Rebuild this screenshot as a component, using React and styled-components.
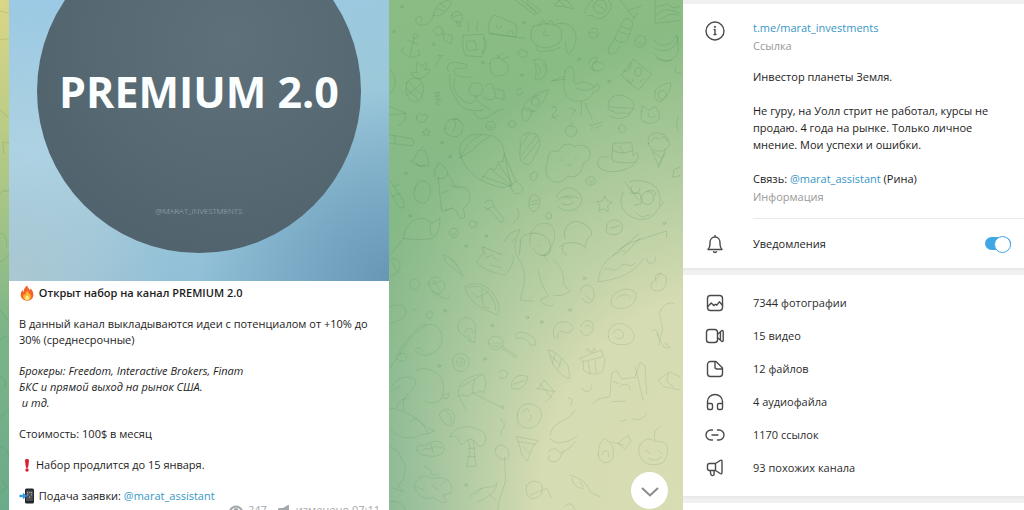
import styled, { createGlobalStyle } from "styled-components"
import { useState } from "react"

const GlobalStyle = createGlobalStyle`
    * {
        box-sizing: border-box;
    }
    body {
        margin: 0;
        font-family: "Open Sans", "Noto Sans", sans-serif;
        font-size: 11px;
        line-height: 17px;
        color: #1c1c1c;
        background: white;
    }
`

const Container = styled.div`
    display: grid;
    grid-template-columns: minmax(0, 1fr) minmax(280px, 341px);
    height: 100vh;
    overflow: hidden;
`

/* ---------- chat ---------- */

const Chat = styled.main`
    position: relative;
    overflow: hidden;
    background:
        radial-gradient(ellipse 150px 330px at 0 0, #dbd786 0%, rgba(219,215,134,0) 100%),
        radial-gradient(ellipse 400px 480px at 105% 100%, #d9ddb3 0%, #d5dbb2 45%, rgba(213,219,178,0) 100%),
        linear-gradient(to bottom, #8abc83 0%, #85b987 45%, #6bab89 100%);
`
const Wallpaper = styled.svg`
    position: absolute;
    top: 0;
    left: 0;
    fill: none;
    stroke: #3f7d4c;
    stroke-opacity: 0.2;
    stroke-width: 3;
    stroke-linecap: round;
    stroke-linejoin: round;
`
const FadedGroup = styled.g`
    stroke-opacity: 0.16;
`
const Message = styled.article`
    position: relative;
    width: 380px;
    max-width: 100%;
    margin: -99px 0 0 9px;
    background: white;
`
const Photo = styled.div`
    display: grid;
    place-items: center;
    aspect-ratio: 1;
    background:
        radial-gradient(ellipse 50% 50% at 100% 100%, #6797b5 0%, rgba(103,151,181,0) 100%),
        radial-gradient(ellipse 45% 35% at 0 100%, #abc7d2 0%, rgba(171,199,210,0) 100%),
        radial-gradient(ellipse 40% 40% at 5% 68%, #aed3e3 0%, rgba(174,211,227,0) 100%),
        linear-gradient(160deg, #9cc9e3 30%, #9cc8da 60%, #8abbd6 100%);
`
const Disc = styled.div`
    display: grid;
    grid-template-rows: 1fr auto 1fr;
    justify-items: center;
    width: 324px;
    height: 324px;
    border-radius: 50%;
    background: radial-gradient(circle at 60% 35%, #5e7079 0%, #566972 50%, #4b5e6a 100%);
`
const PhotoTitle = styled.h2`
    grid-row: 2;
    margin: 0;
    padding-top: 2px;
    font-size: 43px;
    line-height: 46px;
    font-weight: 700;
    white-space: nowrap;
    color: #fbfeff;
`
const PhotoHandle = styled.span`
    grid-row: 3;
    align-self: end;
    padding-bottom: 36px;
    font-size: 8px;
    line-height: 12px;
    font-weight: 300;
    color: #a3b0b6;
`
const MessageBody = styled.div`
    display: flex;
    flex-direction: column;
    gap: 15px;
    padding: 4px 10px 0;
    line-height: 16px;
`
const Paragraph = styled.p`
    margin: 0;
    white-space: pre-wrap;
    font-style: ${props => props.$italic ? 'italic' : 'normal'};
    font-weight: ${props => props.$bold ? 600 : 400};
`
const Emoji = styled.svg`
    width: 16px;
    height: 16px;
    margin-right: 1px;
    vertical-align: top;
`
const Meta = styled.div`
    display: flex;
    align-items: center;
    justify-content: flex-end;
    gap: 5px;
    padding: 0 9px 6px;
    line-height: 12px;
    color: #a3a8ab;

    svg {
        width: 14px;
        height: 12px;
    }
    svg + span + svg {
        margin-left: 5px;
    }
`
const LinkTag = styled.a`
    color: #3797c6;
    text-decoration: none;

    &:hover {
        text-decoration: underline;
    }
`
const ScrollButton = styled.button`
    position: absolute;
    right: 15px;
    bottom: 1px;
    display: grid;
    place-items: center;
    width: 37px;
    height: 37px;
    padding: 3px 0 0;
    border: none;
    border-radius: 50%;
    background: white;
    cursor: pointer;
`

/* ---------- channel info ---------- */

const Sidebar = styled.aside`
    display: flex;
    flex-direction: column;
    overflow: hidden;
    background: white;
`
const Separator = styled.div`
    flex: none;
    height: ${props => props.$small ? '4px' : '7px'};
    background: ${props => props.$small ? '#f0f0f0' : 'linear-gradient(to bottom, #e7e7e7, #f1f1f1 4px)'};
`
const Row = styled.div`
    display: grid;
    grid-template-columns: 24px minmax(0, 1fr);
    column-gap: 26px;
    padding-left: 20px;
`
const InfoRow = styled(Row)`
    padding-top: 15px;
`
const InfoText = styled.div`
    display: flex;
    flex-direction: column;
    gap: 1px;
    padding-bottom: 13px;
    border-bottom: 1px solid #e9e9e9;
`
const Label = styled.span`
    color: #999;
`
const About = styled.p`
    margin: 13px 0 0;
    padding-right: 20px;
    white-space: pre-line;
`
const NotifyRow = styled(Row).attrs({ as: 'label' })`
    grid-template-columns: 24px minmax(0, 1fr) auto;
    align-items: center;
    height: 49px;
    padding-right: 13px;
    cursor: pointer;
`
const Toggle = styled.input`
    appearance: none;
    position: relative;
    width: 26px;
    height: 13px;
    margin: 0;
    border-radius: 7px;
    background: ${props => props.checked ? '#40a7e3' : '#b5b5b5'};
    cursor: pointer;

    &::after {
        content: "";
        position: absolute;
        top: -1px;
        ${props => props.checked ? 'right: 0;' : 'left: 0;'}
        width: 15px;
        height: 15px;
        border: 1px solid ${props => props.checked ? '#40a7e3' : '#b5b5b5'};
        border-radius: 50%;
        background: white;
    }
`
const MediaList = styled.ul`
    flex: none;
    margin: 0;
    padding: 11px 0 12px;
    list-style: none;
`
const MediaButton = styled(Row).attrs({ as: 'button' })`
    align-items: center;
    width: 100%;
    height: 33px;
    padding-top: 0;
    padding-bottom: 0;
    border: none;
    background: none;
    font: inherit;
    color: #2c2c2c;
    text-align: left;
    cursor: pointer;

    &:hover {
        background: #f4f4f4;
    }
`
const Icon = styled.svg`
    width: 24px;
    height: 24px;
    fill: none;
    stroke: #4a4a4a;
    stroke-width: 1.4;
    stroke-linecap: round;
    stroke-linejoin: round;
`

const media = [
    {
        text: '7344 фотографии',
        icon: <><rect x="4.5" y="4.5" width="15" height="15" rx="3" /><path d="M4.8 15.500l3.400-3.500 2.600 2.600 1.600-1.400 1.400 1 2.500-3.400 3.200 3.500" /></>
    },
    {
        text: '15 видео',
        icon: <><rect x="3.5" y="5.5" width="11" height="13" rx="2.8" /><path d="M14.5 10.2l3.8-3.2c1-.8 1.900-.4 1.900.8v8.400c0 1.200-.9 1.600-1.900.8l-3.800-3.200M17.400 8v8" /></>
    },
    {
        text: '12 файлов',
        icon: <path d="M7.500 4.500H13l6.500 6.500v5.500a3 3 0 0 1-3 3h-9a3 3 0 0 1-3-3v-9a3 3 0 0 1 3-3zM12 4.500V10a2 2 0 0 0 2 2h5.500" />
    },
    {
        text: '4 аудиофайла',
        icon: <path d="M4.500 17v-5.500a7.500 7 0 0 1 15 0V17M4.500 13.500H8a1.500 1.500 0 0 1 1.500 1.500v3A1.500 1.500 0 0 1 8 19.500H6A1.500 1.500 0 0 1 4.500 18zM19.500 13.500H16a1.500 1.500 0 0 0-1.500 1.500v3a1.500 1.500 0 0 0 1.500 1.500h2a1.500 1.500 0 0 0 1.500-1.500z" />
    },
    {
        text: '1170 ссылок',
        icon: <path d="M9.500 7H8a5 5 0 0 0 0 10h1.500M14.500 7H16a5 5 0 0 1 0 10h-1.500M9 12h6" />
    },
    {
        text: '93 похожих канала',
        icon: <path d="M12.500 7.500H6.500a2 2 0 0 0-2 2v3a2 2 0 0 0 2 2h6M12.500 7.500v7l4.700 3c1.100.7 1.800.3 1.800-.9V5.400c0-1.200-.7-1.600-1.800-.9zM7.200 14.500l.6 3.600c.2 1 .8 1.500 1.700 1.500s1.600-.6 1.600-1.600v-3.500" />
    }
]

// line doodles, drawn on a grid three times finer than the chat
const doodlesTop = [
    'M130 45c5-25 20-40 50-45M130 45c20 10 45-10 55-40M140 25l25 10M150 10l18 15M130 48c-10 30-35 30-45 25s-10-20 0-24 15 12 5 20',
    'M185 45c5-15 30-15 32 5s-12 22-22 14-12-12-10-19zM200 62l5 18 8-2-4-16M190 50l24-6',
    'M375 0l60 45 18-12L400-8M385-6l56 45M410 8l28 26',
    'M495 15c10-18 25-20 40-10l15 22-30-8-20 0zM505 0l20 18',
    'M585 40c0-20 15-30 25-42M590 48c20-6 25 6 35 8s25-8 35-25-5-30-5-30M610 22a20 20 0 1 0 40-4 20 20 0 1 0-40 4M618 12l25 16',
    'M690 0c10 15 20 20 25 35 10-14 30-8 40-20M715 35l20 20M700 60c10-12 30 0 28 15l-15 45c-8 10-35 10-38-5zM675 115c-10 15-25 30-18 45 15 5 25-5 30-20M695 80l25 8M688 95l26 8M728 60l14-20',
    'M795 0v70l75-8M800 20l35-8c10 15 25 15 35 5M800 45c20-25 45-15 70-5M810 60c20-20 40-18 55-15',
    'M35 150c10 25 35 25 55 15M45 140l-10 12M60 165c5-20 8-35 12-50M52 120l30 12M72 115c-8-8 0-18 8-12s2 14-8 12M88 165l-2-15',
    'M130 90c8-15 28-12 28 2s-14 18-22 10zM160 100l28 8-5 24-20-12z',
    'M220 105l60-2c5 25 5 45-4 68l-50-4c-8-18-10-40-6-62zM280 115c14 5 12 42-5 42M230 125c8-8 16 4 24-4l8 30c-10-6-20 6-30-2zM235 92c-6-12 6-15 0-28M262 92c-6-12 6-15 0-25',
    'M298 100c-5-25 0-45 15-55l60 25c10 5 8 25 5 40zM300 100l105 15M320 75a8 6 0 1 0 14 2M355 100c0-12 15-12 15 2',
    'M430 80c-12 18-10 45 10 55 20 15 50 8 70-10 10-25 5-45-20-52-20-3-45-2-60 7zM445 80l15-20 10 12 14-12 6 12M500 72c30-8 55 5 58 40 2 20-10 40-22 50-8-5-10-22-8-35M440 140c-5 10 5 16 20 14s30 0 50-12M465 90l-5 15 14 2',
    'M597 98a14 15 0 1 0 28 4 14 15 0 1 0-28-4M602 100c8-8 16 0 20 8',
    'M736 120a16 15 0 1 0 30 8 16 15 0 1 0-30-8M745 126a6 6 0 1 0 12 2',
    'M795 120c5 15 25 20 45 10 15-8 10-20 20-22M795 145c15 12 45 10 60-10s5-20 5-30M793 160c15 30 60 30 72-5l-3-45M800 175c15 10 30 12 45 5',
    'M50 250c-5 25 0 50 25 56 20 0 28-30 24-50-5-25-40-30-49-6zM55 245l40 40M50 265l35 35M95 250l-42 35M90 235c15-5 25-12 30-28l-18 3c8-10 8-16 6-24l-14 14c-2-10-8-12-14-12 0 12-4 20 2 32-10-4-15-2-20 0 4 10 14 14 28 17z',
    'M140 170c4-8 14-4 10 5s-12 10-10 22M150 168l12-2M132 280l16-4-14 14 16-4-14 14 16-2-14 14 12 4',
    'M300 190c0-15 20-22 35-12s22 20 20 32-18 18-34 18-22-20-21-38zM325 175c2-10 8-14 14-16M335 178l20-8M328 172l-12-10',
    'M385 158c4-10 14-12 16-4 10-6 14 6 8 16-12 6-28-2-24-12z',
    'M432 180c20-10 40 5 38 30s-20 30-36 26c8-18 4-38-2-56zM440 190l14 20-10 18M455 190l12 14',
    'M175 215c-10-25 10-30 30-27s35 8 25 14-35-2-38 12 20 18 50 18M180 225c-5 30 5 55 30 90 20 20 50 18 70 15M240 260c8-18 35-15 38 5s-20 30-32 20-10-15-6-25zM285 260c10-18 25-10 25 5l32 8v25l-25-5M310 270c20 25-10 40-30 20M250 335c5 15 20 25 35 20s35-25 55-28M255 285c0 25 30 30 45 45M195 235c-10 30 0 50 30 70 15 10 25 5 30-5',
    'M380 270l14-5M378 280c8 10 20 6 18-4',
    'M400 325c-10 20-2 35 5 38 10 4 20-20 22-32M400 325c5-25 35-45 75-56-5 25-22 45-42 66zM425 300a12 12 0 1 0 22 10 12 12 0 1 0-22-10M430 290l20-4M410 322l20 10',
    'M525 215c5-20 25-18 27 0s-5 30 5 38c15-10 45-8 55 10l10-12c12 14 5 22-12 26-10 25-40 30-60 25-35-10-30-50-25-87zM524 238l-40 5 38-14M575 305l-2 40M585 310l22 50M540 325l18 5-12 12M600 375c5-10 10 10 4 12M610 375l28-10M615 385l22-10M560 265c20 10 40 8 55-5',
    'M485 325c12-15 20 5 10 12s-10 15 4 20M482 355l22-8M490 322l5-4',
    'M595 190c5-15 20-22 28-15l-12 15c10-5 25-8 30 5M600 200c10 15 30 18 42 5M612 215c-10-20-5-28 8-30',
    'M695 225l35-47 55 45-40 47zM700 215c15 0 25-10 22-25M735 215a10 9 0 1 0 18 2 10 9 0 1 0-18-2M715 235a8 8 0 1 0 14 4M750 245l14-10',
    'M655 320c-5-25 20-38 40-34s45 22 35 38zM653 325c5 10 15 5 20 12s25 0 30 2 20 5 28-15M658 345c10 15 50 15 65-5',
    'M795 275c5-15 20-22 48-27-2 25-12 45-30 57-15-2-22-15-18-30zM805 280c5-15 30-10 22 8s-24 10-22-8',
    'M755 335l2-18 18 14c8-4 15-8 20-12l12 18c8 25-15 35-35 32s-22-20-17-34zM775 340c-2 14 15 18 22 6',
    'M80 350c5-15 15-8 18-4 8-8 18 0 12 10s-14 12-20 10-12-8-10-16z',
    'M165 385c0-20 15-30 28-28s28 8 25 30-18 25-32 22-22-12-21-24zM192 358c8 15 4 28-5 38M188 360c10-8 18-4 20 2',
    'M97 395l8-2 4-8 4 8 8 2-6 5 2 8-8-4-8 4 2-8zM288 380a14 12 0 1 0 28-6 14 12 0 1 0-28 6M298 376a5 5 0 1 0 8 0M355 372c-2-12 20-14 22-2s-18 18-22 2M525 392c5-15 12-14 20-14s22 10 12 24-26 10-32-10M540 378l8-12M686 385c0-14 20-14 22 0s-20 22-22 0',
    'M0 405l65 10c10 5 8 20-2 22L0 430M15 408v20M0 320l45 18c5 15-5 35-20 38M0 345l48-5M0 210c20 15 22 50 0 70',
    'M210 460c-5-35 20-57 60-57s65 10 72 50 10 60 22 102l-24 8c-50-10-110-30-130-103zM212 475c10-30 30-58 62-70M205 475l45-25c15-20 30-30 50-40M280 530l20-25 15 5 12-25 12 0 2-20M280 530l85 30M305 510l60 48M325 490l45 66M342 460l36 85M362 555l18-12 20 22c-5 15-18 18-28 14l-12-20M280 530l-6 10',
    'M395 410c12-15 30-12 42-8M390 415c5 25-5 45 2 65 10 18 22 15 28 12 15-20 20-40 30-55 0-20-5-30-12-35M395 465l45-58M400 480l48-60M395 435l20-30',
    'M475 470c0-15 15-20 30-15 10-22 30-30 50-15 15-8 40-5 45 15 5 20-10 30-20 35-5 35-25 45-45 38-15 20-40 25-55 10-20-15-10-45-5-68zM515 478l2 4M555 475l3 3M532 495c6 5 10 2 12-2',
    'M625 500c-8-25 10-35 30-28M665 470c5-18 0-30 5-40l55-2 5 40 10-10c8 8 5 20-5 28-20 5-50 2-65-2zM625 500c20 25 90 18 115-15M668 450c20 12 40 10 58 2M690 440l12 20',
    'M775 430c-5-30 20-35 38-30s30 25 22 40c-20 25-55 12-60-10zM785 450l22 52 20-55M790 455l25 20M805 495l20-35M785 425c5-18 20-14 24-4M815 415c8-10 18 0 16 8',
    'M65 485c12-5 12-30 25-35 18-2 22 12 24 30l2 18c-20 2-38-2-51-13zM80 488c2 14 18 16 24 4M92 448l8-8',
    'M140 495c5-10 15-5 20 3s18 15 10 28-20 8-30 10M145 530l5 60 5 42c15 2 20 0 30-8l15 10 10 22 15-4-5-26c20-15 25-35 15-52s-20-10-35-15-15-30-28-38M155 580l20-8M180 555l25 10M135 530c-5-20 5-28 10-38M165 630l20-6',
    'M75 565c5-22 22-28 35-18s15 30 5 50-25 12-35 5-8-22-5-37zM425 520c8-10 20-2 17 8s-12 18-16 12-8-14-1-20M418 600c2-22 20-18 28-8s4 30-8 40-25-8-20-32M425 605l18-5M423 615l20-5',
    'M285 610c5-12 15-12 22-6l8 20 28 35-10 10-28-34-22-15M310 620l-20 8M382 625c10 15 5 30-12 45M588 540c5-15 28-12 28 2s-28 22-28-2M600 542a4 4 0 1 0 7 0',
    'M500 590c5-20 30-30 45-25s28 18 30 32-12 30-28 34-38-2-43-12M505 600c10-15 45-15 60-5M515 610c12 8 30 5 35-5M525 590l20 6',
    'M620 605l18-2 6-16 8 15 14 5-13 10 2 18-14-8-15 5 4-15z',
    'M700 575c-12 25-10 50 15 70 30 20 60 18 80-5l25-35M720 545c25-8 60-2 80 20 15 25 10 35 8 50M725 560a14 12 0 1 0 25 4M755 590a17 18 0 1 0 36 8 17 18 0 1 0-36-8M705 545l40 55M720 580l30 0 5 30-22 6M770 575c15-10 30 0 28 12M740 640l15 12 25-8',
    'M0 540l25 40c15 15 20 30 15 45l-15-5L0 575M30 580l-22 8M10 560l18-6',
    'M0 765l40-50c5-35 20-55 55-60 15 0 25 12 30 15l25-15c0 25-5 45-18 55-12-5-15-20-10-38M40 715c30 5 60 5 90 0',
    'M650 680c0-15 20-25 35-18s15 20 8 32-25 10-35 8-10-10-8-22M660 685l30-8M178 700a13 14 0 1 0 26-2 13 14 0 1 0-26 2M187 698a5 5 0 1 0 8 0M237 672l8-12 10 8 6-2-2 14-14 4zM468 645l8-10 8 8 0 12-12 2z',
    'M345 725c5-20 20-30 45-36-5 20-15 25-25 35M390 720c5-15 30-22 50-20s40 15 42 40-15 30-30 25M392 722l-4 43M445 735l3 2M285 765l-8-25 60 25M525 715c-10-35 20-55 40-50s42 20 40 40c-15 10-15 20-20 35M510 740c20-20 60-15 80 5M530 765c-15-5-15-20-10-28',
    'M670 765c10-10 40-35 60-40l100-32v20M690 750l55-48M700 765l50-50',
    'M865 350c-8 15-5 30 0 40M870 500l-18 10-4 22 22-5M860 200a10 10 0 1 0 12 18'
]

const doodlesBottom = [
    'M0 15c15-10 32 0 30 20S10 65 0 60M5 20l20 35M160 0c15 5 35 15 40 30l20 35-35-30c-12-5-20-18-25-35zM180 10l20 22',
    'M280-8l-20 28c20 25 55 35 85 40 20-20 30-50 25-60M285 10l20-10 20 20M300 30l35 8',
    'M380-50c-20 45 20 70 22 100 5 35-5 60-12 85 15 5 30-2 40 5M445 45c5 35 20 60 30 78l-25 12c5 15 35 25 40 12M490 15c25 20 35 50 30 70l20 25c-20 10-35 15-50 10M430-20c10 25 40 30 50 5M420-35c-5-35 20-65 50-60s30 50 10 75-20 15-10 35',
    'M625 80c5-60 40-80 80-95M625 80c50-5 105-20 135-70M640 45c20-15 30 15 50-10 20-20 25 10 45-10M770 10a14 12 0 1 0 25-4',
    'M60 90a13 15 0 1 0 28-4 13 15 0 1 0-28 4M115 85c5-20 25-25 40-10s10 25-2 38-30-5-38-28zM140 112l14 16 20 5 8-15M130 75l20 30M118 90l34-12M125 105l15 20',
    'M225 95c30-20 65-5 85 22s20 50 12 63C270 160 235 140 225 95zM235 98c25-10 50 0 65 22s18 30 16 45M245 110l15 15M275 105l5 50 18 5M260 130l35-20',
    'M0 205c35-8 50-20 48-38S25 145 0 155M68 165l12-4M110 175l12-8 8 12-8 12-12-4z',
    'M205 225c-10-35 25-45 42-30s5 40 8 68l-18-5c-10-20-25-15-32-33zM225 232c5-18 22-15 25 0M235 240l8 15',
    'M295 265a22 20 0 1 0 44-3 22 20 0 1 0-44 3M304 264a13 12 0 1 0 26-2M312 262a5 5 0 1 0 10 0M335 280l45 30M337 274l45 30',
    'M378 235c15-8 30-2 45 8s12 15 14 26l-15 3c-8-20-20-25-42-22zM490 225c5-25 30-30 48-20s10 25-2 28-20-12-32 2l0 15-12-5z',
    'M105 210c25-8 45 5 50 30s-10 50-40 60c-20 5-35-5-38-14s12-12 22 2M110 210C75 230 40 270 30 300M105 205C65 230 40 265 22 300M20 310c5-20 28-18 30-5s-20 20-30 5L0 340',
    'M188 320c0-22 20-28 35-22s20 30 5 45-40 5-40-23M200 320c5-18 28-12 24 4s-28 10-24-4M210 318a5 5 0 1 0 8 0',
    'M80 345c25-10 55 0 70 20s10 35 8 52-10 22-25 26-25-2-28-5M158 420l20-5-5 15-15 0',
    'M205 425c-5-35 15-60 75-68 10 25 8 45 0 55-10-5-20 0-22 5-10-8-18-2-22 8-10-6-22-5-31 0zM255 375c-10 20-8 35-2 45M275 360l-60 35M260 420l80 40M340 460c5-10-5-10-10-4M210 430l20 40',
    'M5 395c10-25 45-35 65-25s-5 35-15 45-25 30-10 50M0 410l28-15M20 460c5-25 20-30 35-30',
    'M0 460c45 5 95 30 115 75l-25 5M0 520c15 25 50 35 85 25M60 500c10-15 30-8 45 15M115 520l20 8-20 8',
    'M148 480c5-22 30-22 40-8s5 25 0 36-35-2-40-28M165 468c15 5 20 20 18 35M325 355c5-12 25-12 28 0s-20 22-25 10M365 385c5-25 30-28 48-20-2 25-20 45-48 35zM370 388l35-12',
    'M475 285c15 0 45 25 60 50l5 35c-20 0-40-25-50-40zM480 300l30 28M495 300l-8 25M515 312l-10 30M570 310l65-25 5 20-60 15zM580 320l0 25c20 18 50 15 60 0l5-35M595 320l5 35M615 315l3 38M600 295c-20-15-5-20 5-2 5-18 20-15 5 0',
    'M655 245c-5-30 25-45 45-38s35 25 32 42-20 20-40 20-35-10-37-24zM670 235c5-15 25-15 30 0s-15 22-25 10M665 130c10-25 45-35 65-22s0 40-10 45-40 15-55-2zM680 130c15-15 35-15 42 0M570 110c5-25 40-30 42 5s-25 35-35 15M585 120l20 15',
    'M572 215c8-25 38-25 38 0s-30 40-38 10M585 215c5-8 18-5 16 5M785 85c10-10 20-15 25-30l18 10c5 25-5 40-20 42s-30-2-23-22M810 55c-15 0-18 20-10 25',
    'M808 180c5-30 25-40 45-35M810 185l8 35-12 50M800 235l20 40c25 10 25 0 5-10M785 230c10-15 22 0 20 15',
    'M660 420l5-65 15-8 15 25 40-5 15-45 15 10 5 85M670 380l15 5M665 440l40-2M690 395c10-15 35-5 30 10M735 335l25 100M690 500l20-6M725 490c20 10 35 0 45-15',
    'M805 375l35-25 30 15M805 375l15 20 50 10M835 355l-5 25 20 15M575 400c15 20 35 5 30-10M610 445c15-20 35-15 50-20M535 430c15-5 15 15 5 22',
    'M445 400l18-25 30 35c-10 15-15 20-25 30M440 400l55 10M450 385l35 45',
    'M382 480c5-35 30-40 55-28s20 45 0 60-60 8-55-32zM400 470c5-12 15-12 16 0M420 480c8 5 5 15-8 18M335 490c-8 15 10 5 8 20s-12 10-10 30',
    'M180 545c10-25 40-35 65-28s45 15 42 35-15 25-22 20-15-25-30-18-15 20-25 10 0-25-30-19zM235 555c10 25 0 55-5 80l30-2c-10-30-5-55-10-78M235 580l20 0M232 605l25 0',
    'M80 585c0-20 15-15 25-12 15-15 40-20 52-5s0 30-5 30-15 10-35 5-15 5-37-18zM95 590c10-20 25 0 35-12s15 5 25 0M122 565l8 30',
    'M380 545l65 12c-5 10-15 10-18 20l-15 40c-10-5-20-20-20-35zM385 560l50 8M400 575l20 20M318 580c10-20 35-8 38 15s-20 25-32 10-10-15-6-25z',
    'M480 540c5-35 40-40 60-55l15-20M480 550c20 25 55 10 80-5M475 590c10-10 25-15 35 5 15-10 35-15 45-35M480 600c-15 15 5 25 20 18s10-20 22-28',
    'M625 600c0-30 10-45 20-50 15 15 28 20 25 50s-40 32-45 0zM635 600c5-20 25-15 22 5M685 565l30-25 8 20-18 22zM660 560l40 10',
    'M750 570c15-25 35-20 45-10 20-5 42 5 38 30s-10 35-30 38-45 0-53-25 0-33 0-33zM795 555c-5-20 0-30 15-40M765 585l15 10M805 585l10 10M775 610c15 10 30 5 40-5',
    'M15 580c15 10 15 30 25 40s5 60-15 70l15 20-30-10M0 575l15 10M100 630l20 15 5 15 20 0M95 665c20-10 25 10 40 5s45-2 50 25-15 20-25 25l10 20c-10 10-30-5-35-10s-30 10-50-15-10-35 10-50M125 690l20 15M80 695l20 10M150 690l20-15',
    'M240 730c5-20 35-35 70-35l10-10c0 25-30 45-55 55M345 605c-5 35 8 55-2 85s-15 40-20 75M300 720l20 20M255 720l20-20M0 740c25-5 45 10 45 25',
    'M410 690c10-15 40-15 45 0s0 35-20 40-30-15-25-40M420 720l50-20 15 30M540 660c30 10 50 20 60 50l30 15M545 670c5 20 15 30 35 30M570 680l10 15M525 755c10-15 25-10 30 10'
]

const dots = [
    [402, 68], [130, 133], [567, 178], [395, 225], [657, 245], [278, 188], [156, 428], [180, 470], [47, 520], [823, 670],
    [288, 708], [228, 738], [60, 648], [165, 932], [307, 977], [455, 966], [540, 930], [285, 1077], [147, 1098], [412, 953],
    [583, 835], [228, 1455], [35, 20], [12, 95]
]

const doodlesLeft = [
    'M27 40c-12 0-18-8-27-6M27 120C12 110 8 125 0 118M0 330c10 5 16 20 26 22M27 430L8 425l4 35M0 580c15-20 20 5 27-10',
    'M0 700c18 0 22 20 20 40M27 765c-15 5-15 25-27 20M0 930l27 35M27 1010c-15-8-20 10-27 12M0 1130c15 5 22 20 12 35M27 1230l-27 22M0 1340c20 0 25 20 27 35M5 1440l16 20-18 18'
]

const Doodles = () => (
    <Wallpaper width="683" height="510" aria-hidden="true">
        <g transform="scale(0.3333)">
            {doodlesLeft.map((d, i) => <path key={i} d={d} />)}
        </g>
        <g transform="translate(390 0) scale(0.3333)">
            {doodlesTop.map((d, i) => <path key={i} d={d} />)}
            {dots.map(([x, y]) => <circle key={x + '-' + y} cx={x} cy={y} r="4" />)}
        </g>
        <FadedGroup transform="translate(390 255) scale(0.3333)">
            {doodlesBottom.map((d, i) => <path key={i} d={d} />)}
        </FadedGroup>
    </Wallpaper>
)

const Fire = () => (
    <Emoji viewBox="0 0 16 16" aria-label="огонь">
        <path fill="#f2622a" d="M8.200.5c.4 2.300 2 3.300 2.800 5 .4-.7.4-1.500.2-2.200 2 1.600 3.300 4.200 3.200 6.800-.1 3.400-2.600 5.600-6.100 5.600S1.800 13.500 1.700 10c0-2 .8-3.700 1.800-5 .1 1 .5 1.700 1.100 2.200C4.600 4.300 6 1.800 8.200.5z" />
        <path fill="#ffb52e" d="M8.300 5.500c.2 2 3.900 3.400 3.700 6.300-.1 2.200-1.700 3.500-3.800 3.500s-4-1.300-4.100-3.500c0-1.300.5-2.200 1.200-3 .3.800.7 1.200 1.200 1.300-.1-1.800.5-3.600 1.800-4.600z" />
        <path fill="#fff0a0" d="M8.300 10c.3 1.100 1.800 1.600 1.700 3.100-.1 1.300-.9 2-1.900 2s-1.900-.8-1.900-2c0-1.400 1.600-1.900 2.100-3.100z" />
    </Emoji>
)

const Exclamation = () => (
    <Emoji viewBox="0 0 16 16" aria-label="важно">
        <path fill="#dc1f2e" d="M6 3.500C6 2.500 6.800 2 8 2s2 .5 2 1.500L9.200 10c-.1.600-.5 1-1.200 1s-1.100-.4-1.200-1z" />
        <circle fill="#dc1f2e" cx="8" cy="13" r="1.700" />
    </Emoji>
)

const Phone = () => (
    <Emoji viewBox="0 0 16 16" aria-label="телефон">
        <rect x="6" y="0.500" width="9" height="15" rx="1.500" fill="#22272b" />
        <rect x="7.200" y="2.500" width="6.600" height="10.500" fill="#4c5053" />
        <path fill="#c8a38c" d="M8 4h1.200v1.200H8zM12 4h1.200v1.200H12zM10 8.500h1.200v1.200H10z" />
        <path fill="#82a9ba" d="M10 4h1.200v1.200H10zM8 6.300h1.200v1.200H8zM12 6.300h1.200v1.200H12z" />
        <path fill="#2f9ae0" d="M.5 6.800h3.500V4.800L8 8l-4 3.200v-2h-3.500z" />
    </Emoji>
)

const App = () => {

    const [notify, setNotify] = useState(true)

    return (
        <>
            <GlobalStyle />
            <Container>
                <Chat>
                    <Doodles />
                    <Message>
                        <Photo>
                            <Disc>
                                <PhotoTitle>PREMIUM 2.0</PhotoTitle>
                                <PhotoHandle>@MARAT_INVESTMENTS</PhotoHandle>
                            </Disc>
                        </Photo>
                        <MessageBody>
                            <Paragraph $bold><Fire /> Открыт набор на канал PREMIUM 2.0</Paragraph>
                            <Paragraph>В данный канал выкладываются идеи с потенциалом от +10% до 30% (среднесрочные)</Paragraph>
                            <Paragraph $italic>{'Брокеры: Freedom, Interactive Brokers, Finam\nБКС и прямой выход на рынок США.\n и тд.'}</Paragraph>
                            <Paragraph>Стоимость: 100$ в месяц</Paragraph>
                            <Paragraph><Exclamation />Набор продлится до 15 января.</Paragraph>
                            <Paragraph><Phone /> Подача заявки: <LinkTag href="#assistant">@marat_assistant</LinkTag></Paragraph>
                        </MessageBody>
                        <Meta>
                            <svg viewBox="0 0 14 12" fill="none" stroke="currentColor" strokeWidth="2">
                                <path d="M1 6.500c3-5.500 9-5.500 12 0-3 5-9 5-12 0z" />
                                <circle cx="7" cy="6.500" r="1.500" />
                            </svg>
                            <span>247</span>
                            <svg viewBox="0 0 14 12" fill="currentColor">
                                <path d="M1 5.500C1 4.500 1.700 4 2.500 4H6l5-3c.7-.3 1 0 1 .5v9c0 .5-.3.800-1 .5L6 8v3H4L3 8c-1.200 0-2-.5-2-1.500z" />
                            </svg>
                            <span>изменено 07:11</span>
                        </Meta>
                    </Message>
                    <ScrollButton aria-label="Вниз">
                        <svg width="18" height="10" viewBox="0 0 18 10" fill="none" stroke="#8b8b8b" strokeWidth="2">
                            <path d="M1 1l8 7.500L17 1" />
                        </svg>
                    </ScrollButton>
                </Chat>
                <Sidebar>
                    <Separator $small />
                    <InfoRow>
                        <Icon viewBox="0 0 24 24">
                            <circle cx="12" cy="12" r="9" />
                            <path d="M11.200 10.500h.8v5M11 15.500h2" />
                            <circle cx="12" cy="7.800" r="0.400" />
                        </Icon>
                        <InfoText>
                            <LinkTag href="#channel">t.me/marat_investments</LinkTag>
                            <Label>Ссылка</Label>
                            <About>
                                {'Инвестор планеты Земля.\n\nНе гуру, на Уолл стрит не работал, курсы не продаю. 4 года на рынке. Только личное мнение. Мои успехи и ошибки.\n\nСвязь: '}
                                <LinkTag href="#assistant">@marat_assistant</LinkTag> (Рина)
                            </About>
                            <Label>Информация</Label>
                        </InfoText>
                    </InfoRow>
                    <NotifyRow>
                        <Icon viewBox="0 0 24 24">
                            <path d="M5 17.500c1.500-1.500 2-3 2-5.500v-1.500c0-3 2-5.500 5-5.500s5 2.500 5 5.500V12c0 2.500.5 4 2 5.500zM12 3.500V5M10.500 19.800c.8.700 2.200.7 3 0" />
                        </Icon>
                        <span>Уведомления</span>
                        <Toggle type="checkbox" checked={notify} onChange={(e) => setNotify(e.target.checked)} />
                    </NotifyRow>
                    <Separator />
                    <MediaList>
                        {media.map(item => (
                            <li key={item.text}>
                                <MediaButton>
                                    <Icon viewBox="0 0 24 24">{item.icon}</Icon>
                                    <span>{item.text}</span>
                                </MediaButton>
                            </li>
                        ))}
                    </MediaList>
                    <Separator />
                </Sidebar>
            </Container>
        </>
    )
}

export default App
